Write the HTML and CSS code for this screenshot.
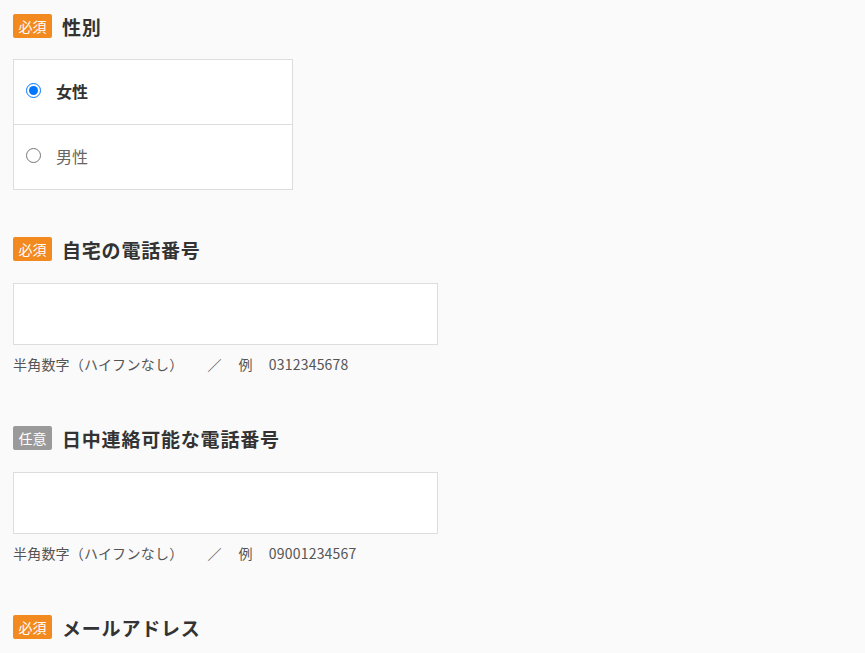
FILE: index.html
```html
<!DOCTYPE html>
<html lang="ja">
<head>
    <meta charset="UTF-8">
    <meta name="viewport" content="width=device-width, initial-scale=1.0">
    <title>お客様情報</title>
    <link rel="stylesheet" href="styles.css">
</head>
<body>
    <div class="form">
        <div class="field field-gender">
            <div class="field-head">
                <span class="badge badge-req">必須</span>
                <span class="field-title">性別</span>
            </div>
            <div class="radio-box">
                <label class="radio-row checked">
                    <input type="radio" name="gender" value="female" checked>
                    <span>女性</span>
                </label>
                <label class="radio-row">
                    <input type="radio" name="gender" value="male">
                    <span>男性</span>
                </label>
            </div>
        </div>

        <div class="field">
            <div class="field-head">
                <span class="badge badge-req">必須</span>
                <span class="field-title">自宅の電話番号</span>
            </div>
            <input type="text" class="text-input" id="homeTel">
            <p class="hint">半角数字（ハイフンなし）<span class="sep">／</span>例<span class="ex">0312345678</span></p>
        </div>

        <div class="field">
            <div class="field-head">
                <span class="badge badge-opt">任意</span>
                <span class="field-title">日中連絡可能な電話番号</span>
            </div>
            <input type="text" class="text-input" id="dayTel">
            <p class="hint">半角数字（ハイフンなし）<span class="sep">／</span>例<span class="ex">09001234567</span></p>
        </div>

        <div class="field">
            <div class="field-head">
                <span class="badge badge-req">必須</span>
                <span class="field-title">メールアドレス</span>
            </div>
        </div>
    </div>
</body>
</html>
```

FILE: styles.css
```css
body {
    margin: 0;
    background-color: #fafafa;
    color: #333;
    font-family: "Noto Sans CJK JP", "Noto Sans", sans-serif;
}
.form {
    padding: 14px 13px;
}
.field {
    margin-bottom: 50px;
}
.field-gender {
    margin-bottom: 47px;
}
.field-head {
    display: flex;
    align-items: center;
    height: 24px;
    margin-bottom: 22px;
}
.field-gender .field-head {
    margin-bottom: 21px;
}
.badge {
    display: inline-block;
    width: 39px;
    height: 24px;
    line-height: 24px;
    text-align: center;
    font-size: 14px;
    color: #fff;
    border-radius: 2px;
}
.badge-req {
    background-color: #f28a1f;
}
.badge-opt {
    background-color: #9a9a9a;
}
.field-title {
    margin-left: 10px;
    font-size: 19px;
    font-weight: bold;
    letter-spacing: 0.8px;
    color: #333;
}
.radio-box {
    width: 278px;
    background-color: #fff;
    border: 1px solid #ddd;
}
.radio-row {
    display: flex;
    align-items: center;
    box-sizing: border-box;
    height: 64px;
    padding: 0 0 3px 12px;
    font-size: 16px;
    color: #666;
}
.radio-row + .radio-row {
    border-top: 1px solid #ddd;
    height: 65px;
}
.radio-row input {
    width: 15px;
    height: 15px;
    margin: 0 15px 0 0;
}
.radio-row.checked {
    font-weight: bold;
    color: #333;
}
.text-input {
    display: block;
    box-sizing: border-box;
    width: 425px;
    height: 62px;
    margin: 0;
    border: 1px solid #ddd;
    background-color: #fff;
}
.hint {
    margin: 7px 0 0;
    line-height: 24px;
    font-size: 14px;
    letter-spacing: 0.2px;
    color: #555;
}
.sep {
    margin: 0 17px 0 24px;
}
.ex {
    margin-left: 16px;
}
```
